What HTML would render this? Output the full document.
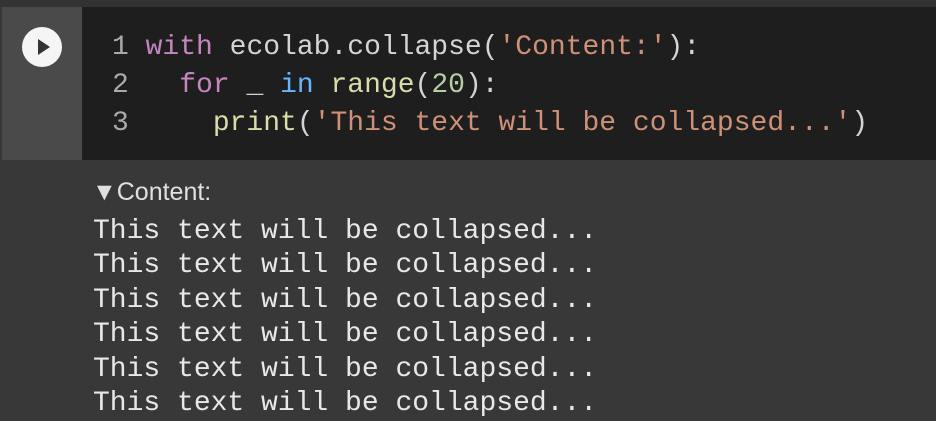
<!DOCTYPE html>
<html><head><style>
body{margin:0;width:936px;height:420px;background:#383838;overflow:hidden;position:relative;font-family:"Liberation Mono",monospace;}
#top{position:absolute;left:0;top:0;width:936px;height:7px;background:#333;}
#gut{position:absolute;left:2px;top:7px;width:80px;height:153px;background:#4a4a4a;}
#code{position:absolute;left:82px;top:7px;width:854px;height:153px;background:#1e1e1e;}
#play{position:absolute;left:22px;top:27px;width:40px;height:40px;border-radius:50%;background:#f5f5f5;}
#play:after{content:"";position:absolute;left:16px;top:12px;border-left:12px solid #333;border-top:8px solid transparent;border-bottom:8px solid transparent;}
.l{position:absolute;left:112px;font-size:28px;line-height:38px;color:#d4d4d4;white-space:pre;}
.n{color:#aaa}.k{color:#c586c0}.b{color:#66b7ff}.f{color:#dcdcaa}.s{color:#ce9178}.d{color:#b5cea8}
#lab{position:absolute;left:92px;top:178px;font-family:"Liberation Sans",sans-serif;font-size:25px;color:#e0e0e0;}
.o{position:absolute;left:93px;font-size:28px;color:#e8e8e8;white-space:pre;line-height:34px;}
</style></head><body>
<div id="top"></div><div id="gut"></div><div id="code"></div><div id="play"></div>
<div class="l" style="top:29px"><span class="n">1</span> <span class="k">with</span> ecolab.collapse(<span class="s">'Content:'</span>):</div>
<div class="l" style="top:67px"><span class="n">2</span>   <span class="k">for</span> _ <span class="b">in</span> <span class="f">range</span>(<span class="d">20</span>):</div>
<div class="l" style="top:105px"><span class="n">3</span>     <span class="f">print</span>(<span class="s">'This text will be collapsed...'</span>)</div>
<div id="lab">▼Content:</div>
<div class="o" style="top:215px">This text will be collapsed...</div>
<div class="o" style="top:249px">This text will be collapsed...</div>
<div class="o" style="top:284px">This text will be collapsed...</div>
<div class="o" style="top:318px">This text will be collapsed...</div>
<div class="o" style="top:353px">This text will be collapsed...</div>
<div class="o" style="top:387px">This text will be collapsed...</div>
</body></html>
